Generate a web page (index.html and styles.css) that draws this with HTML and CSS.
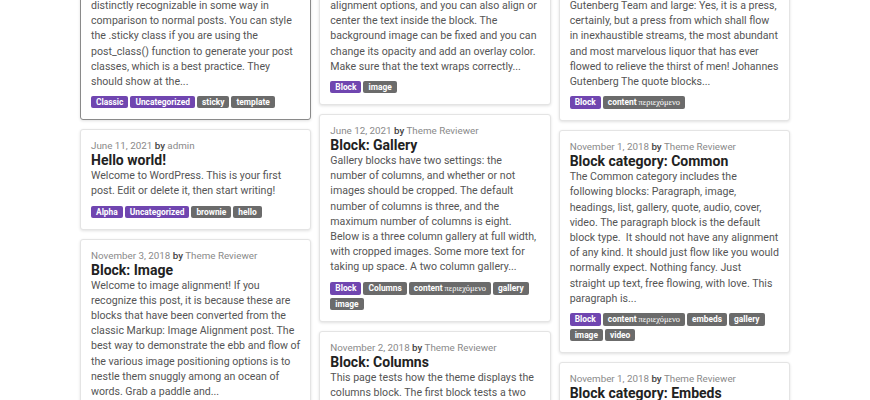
FILE: index.html
```html
<!DOCTYPE html>
<html lang="en">
<head>
    <meta charset="UTF-8">
    <meta name="viewport" content="width=device-width, initial-scale=1.0">
    <title>Blog</title>
    <link rel="stylesheet" href="styles.css">
</head>
<body>
    <div class="posts">
        <div class="column">
            <div class="card sticky cut">
                <p class="excerpt">distinctly recognizable in some way in comparison to normal posts. You can style the .sticky class if you are using the post_class() function to generate your post classes, which is a best practice. They should show at the...</p>
                <div class="tags">
                    <span class="tag cat">Classic</span>
                    <span class="tag cat">Uncategorized</span>
                    <span class="tag">sticky</span>
                    <span class="tag">template</span>
                </div>
            </div>
            <div class="card">
                <div class="meta">June 11, 2021 <b>by</b> admin</div>
                <h2 class="title">Hello world!</h2>
                <p class="excerpt">Welcome to WordPress. This is your first post. Edit or delete it, then start writing!</p>
                <div class="tags">
                    <span class="tag cat">Alpha</span>
                    <span class="tag cat">Uncategorized</span>
                    <span class="tag">brownie</span>
                    <span class="tag">hello</span>
                </div>
            </div>
            <div class="card">
                <div class="meta">November 3, 2018 <b>by</b> Theme Reviewer</div>
                <h2 class="title">Block: Image</h2>
                <p class="excerpt">Welcome to image alignment! If you recognize this post, it is because these are blocks that have been converted from the classic Markup: Image Alignment post. The best way to demonstrate the ebb and flow of the various image positioning options is to nestle them snuggly among an ocean of words. Grab a paddle and...</p>
                <div class="tags">
                    <span class="tag cat">Block</span>
                    <span class="tag">image</span>
                </div>
            </div>
        </div>

        <div class="column">
            <div class="card cut">
                <p class="excerpt">alignment options, and you can also align or center the text inside the block. The background image can be fixed and you can change its opacity and add an overlay color. Make sure that the text wraps correctly...</p>
                <div class="tags">
                    <span class="tag cat">Block</span>
                    <span class="tag">image</span>
                </div>
            </div>
            <div class="card">
                <div class="meta">June 12, 2021 <b>by</b> Theme Reviewer</div>
                <h2 class="title">Block: Gallery</h2>
                <p class="excerpt">Gallery blocks have two settings: the number of columns, and whether or not images should be cropped. The default number of columns is three, and the maximum number of columns is eight. Below is a three column gallery at full width, with cropped images. Some more text for taking up space. A two column gallery...</p>
                <div class="tags">
                    <span class="tag cat">Block</span>
                    <span class="tag">Columns</span>
                    <span class="tag">content <span class="greek">περιεχόμενο</span></span>
                    <span class="tag">gallery</span>
                    <span class="tag">image</span>
                </div>
            </div>
            <div class="card">
                <div class="meta">November 2, 2018 <b>by</b> Theme Reviewer</div>
                <h2 class="title">Block: Columns</h2>
                <p class="excerpt">This page tests how the theme displays the columns block. The first block tests a two column block with paragraphs inside. The second block tests a three column block with more paragraphs...</p>
                <div class="tags">
                    <span class="tag cat">Block</span>
                    <span class="tag">Columns</span>
                </div>
            </div>
        </div>

        <div class="column">
            <div class="card cut">
                <p class="excerpt">Gutenberg Team and large: Yes, it is a press, certainly, but a press from which shall flow in inexhaustible streams, the most abundant and most marvelous liquor that has ever flowed to relieve the thirst of men! Johannes Gutenberg The quote blocks...</p>
                <div class="tags">
                    <span class="tag cat">Block</span>
                    <span class="tag">content <span class="greek">περιεχόμενο</span></span>
                </div>
            </div>
            <div class="card">
                <div class="meta">November 1, 2018 <b>by</b> Theme Reviewer</div>
                <h2 class="title">Block category: Common</h2>
                <p class="excerpt">The Common category includes the following blocks: Paragraph, image, headings, list, gallery, quote, audio, cover, video. The paragraph block is the default block type.&nbsp; It should not have any alignment of any kind. It should just flow like you would normally expect. Nothing fancy. Just straight up text, free flowing, with love. This paragraph is...</p>
                <div class="tags">
                    <span class="tag cat">Block</span>
                    <span class="tag">content <span class="greek">περιεχόμενο</span></span>
                    <span class="tag">embeds</span>
                    <span class="tag">gallery</span>
                    <span class="tag">image</span>
                    <span class="tag">video</span>
                </div>
            </div>
            <div class="card">
                <div class="meta">November 1, 2018 <b>by</b> Theme Reviewer</div>
                <h2 class="title">Block category: Embeds</h2>
                <p class="excerpt">This post tests the embed blocks. Embeds let you show content from other sites right inside your post...</p>
            </div>
        </div>
    </div>
</body>
</html>
```

FILE: styles.css
```css
body {
    margin: 0;
    font-family: Roboto, "Noto Sans", sans-serif;
    background-color: #fff;
    color: #555;
    overflow: hidden;
}
.posts {
    width: 710px;
    margin: -13px auto 0;
    display: grid;
    grid-template-columns: repeat(3, 1fr);
    column-gap: 8px;
    align-items: start;
}
.column {
    display: flex;
    flex-direction: column;
    gap: 9px;
}
.card {
    background: #fff;
    border: 1px solid #e4e4e4;
    border-radius: 3px;
    box-shadow: 0 1px 3px rgba(0, 0, 0, 0.12);
    padding: 10px 10px 11px;
}
.card.sticky {
    border-color: #8a8a8a;
}
.meta {
    font-size: 9.8px;
    line-height: 12px;
    color: #8a8a8a;
}
.meta b {
    font-weight: 500;
    color: #444;
}
.title {
    margin: 0;
    font-size: 14px;
    line-height: 16px;
    font-weight: 700;
    color: #222;
}
.excerpt {
    margin: 0;
    font-size: 10.6px;
    line-height: 15.2px;
}
.tags {
    display: flex;
    flex-wrap: wrap;
    gap: 3px 2px;
    margin-top: 7px;
}
.tag {
    display: inline-block;
    background: #6b6b6b;
    color: #fff;
    font-size: 8.4px;
    font-weight: 700;
    line-height: 12px;
    padding: 0 5px;
    border-radius: 2px;
}
.tag.cat {
    background: #7046b0;
}
.greek {
    font-family: "Liberation Serif", serif;
    font-weight: 400;
}
```
